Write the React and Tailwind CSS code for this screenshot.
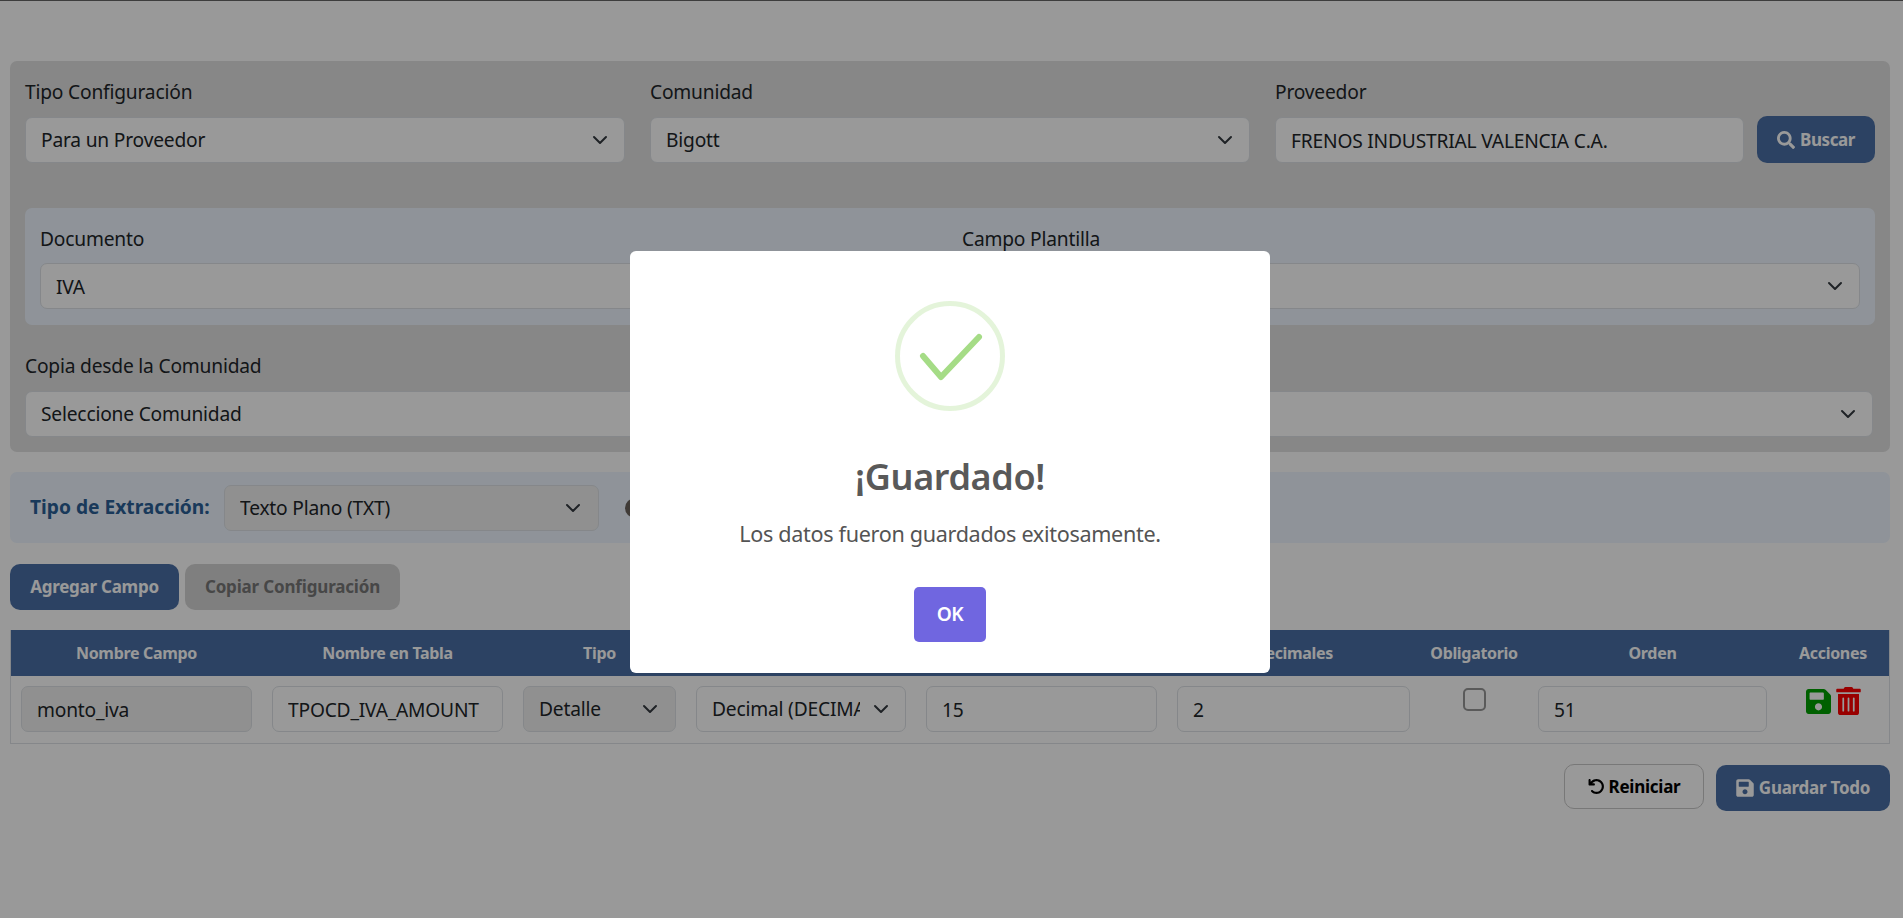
import { FaSearch, FaSave, FaTrashAlt } from "react-icons/fa";
import { FaArrowRotateLeft } from "react-icons/fa6";

const font = { fontFamily: '"Noto Sans", sans-serif' };

function Chevron({ className }) {
  return (
    <svg viewBox="0 0 16 16" className={`absolute pointer-events-none w-[16px] h-[16px] top-1/2 -translate-y-1/2 ${className}`}>
      <path d="m2 5 6 6 6-6" fill="none" stroke="#343a40" strokeWidth="2" strokeLinecap="round" strokeLinejoin="round" />
    </svg>
  );
}

function Select({ value, className = "", bg = "bg-white", border = "border-[#dee2e6]", chevron = "right-[17px]" }) {
  return (
    <div className={`relative ${className}`}>
      <select
        defaultValue={value}
        className={`appearance-none w-full h-[46px] rounded-[7px] border ${border} ${bg} pl-[15px] pr-[45px] pt-[1px] text-[19.2px] tracking-[-0.01em] text-[#212529] outline-none`}
      >
        <option>{value}</option>
      </select>
      <Chevron className={chevron} />
    </div>
  );
}

function Input({ value, className = "", bg = "bg-white" }) {
  return (
    <input
      defaultValue={value}
      className={`w-full h-[46px] rounded-[7px] border border-[#dee2e6] ${bg} px-[15px] text-[19.2px] tracking-[-0.01em] text-[#212529] outline-none ${className}`}
    />
  );
}

function Label({ children, className = "" }) {
  return <label className={`block h-[26px] leading-[26px] text-[19.2px] tracking-[-0.01em] text-[#212529] ${className}`}>{children}</label>;
}

const columns = [
  "Nombre Campo",
  "Nombre en Tabla",
  "Tipo",
  "Tipo de Dato",
  "Longitud",
  "Decimales",
  "Obligatorio",
  "Orden",
  "Acciones",
];

const gridCols = "grid grid-cols-[251px_251px_173px_230px_251px_253px_108px_249px_112px]";

export default function App() {
  return (
    <div style={font} className="h-[918px] overflow-hidden bg-white border-t border-[#666] pl-[10px] pr-[13px] pt-[60px]">
      <div className="h-[391px] rounded-[7px] bg-[#e1e1e1] pt-[18px] px-[15px]">
        <div className="flex">
          <div className="w-[600px]">
            <Label className="mb-[12px]">Tipo Configuración</Label>
            <Select value="Para un Proveedor" />
          </div>
          <div className="w-[600px] ml-[25px]">
            <Label className="mb-[12px]">Comunidad</Label>
            <Select value="Bigott" />
          </div>
          <div className="w-[469px] ml-[25px]">
            <Label className="mb-[12px]">Proveedor</Label>
            <Input value="FRENOS INDUSTRIAL VALENCIA C.A." />
          </div>
          <button className="ml-[13px] mt-[37px] w-[118px] h-[47px] rounded-[10px] bg-[#4a6fa5] text-white text-[17px] font-bold tracking-[-0.025em] flex items-center justify-center gap-[5px]">
            <FaSearch className="w-[18px] h-[18px]" /> Buscar
          </button>
        </div>

        <div className="mt-[45px] h-[117px] rounded-[7px] bg-[#eef5ff] px-[15px] pt-[18px] flex gap-[40px]">
          <div className="w-[882px]">
            <Label className="mb-[11px]">Documento</Label>
            <Input value="IVA" />
          </div>
          <div className="flex-1">
            <Label className="mb-[11px]">Campo Plantilla</Label>
            <Select value="monto_iva" />
          </div>
        </div>

        <div className="mt-[28px] mr-[2px]">
          <Label className="mb-[12px]">Copia desde la Comunidad</Label>
          <Select value="Seleccione Comunidad" />
        </div>
      </div>

      <div className="mt-[20px] h-[71px] rounded-[7px] bg-[#eef5ff] flex items-center pl-[20px]">
        <span className="w-[194px] text-[19.2px] font-bold tracking-normal text-[#2a5f96]">Tipo de Extracción:</span>
        <Select value="Texto Plano (TXT)" className="w-[375px]" bg="bg-[#f1f1f1]" chevron="right-[18px]" />
        <span className="ml-[26px] w-[20px] h-[20px] rounded-full bg-[#6b635d]" />
      </div>

      <div className="mt-[21px] flex gap-[6px]">
        <button className="w-[169px] h-[46px] rounded-[10px] bg-[#4a6fa5] text-white text-[17px] font-bold tracking-[-0.015em]">Agregar Campo</button>
        <button className="w-[215px] h-[46px] rounded-[10px] bg-[#d4d4d4] text-[#777] text-[17px] font-bold tracking-[-0.01em]">Copiar Configuración</button>
      </div>

      <div className="mt-[20px] w-[1880px] border border-[#dee2e6] border-t-0">
        <div className={`${gridCols} bg-[#4a6fa5] h-[46px] items-center`}>
          {columns.map((c) => (
            <div key={c} className="text-center text-white text-[16px] font-bold tracking-[-0.02em]">{c}</div>
          ))}
        </div>
        <div className={`${gridCols} h-[67px] pt-[10px]`}>
          <div className="px-[10px]"><Input value="monto_iva" bg="bg-[#f1f1f1]" /></div>
          <div className="px-[10px]"><Input value="TPOCD_IVA_AMOUNT" /></div>
          <div className="px-[10px]"><Select value="Detalle" bg="bg-[#f1f1f1]" chevron="right-[18px]" /></div>
          <div className="px-[10px]"><Select value="Decimal (DECIMAL)" /></div>
          <div className="px-[10px]"><Input value="15" /></div>
          <div className="px-[10px]"><Input value="2" /></div>
          <div className="flex justify-center pt-[2px]">
            <span className="w-[23px] h-[23px] rounded-[5px] border-2 border-[#969696] bg-white" />
          </div>
          <div className="px-[10px]"><Input value="51" /></div>
          <div className="flex justify-center items-center gap-[5px] h-[28px] mt-[1px]">
            <FaSave className="w-[25px] h-[29px] text-[#00a000]" />
            <FaTrashAlt className="w-[25px] h-[28px] text-[#ff0000]" />
          </div>
        </div>
      </div>

      <div className="mt-[20px] flex justify-end gap-[12px]">
        <button className="w-[140px] h-[45px] rounded-[10px] border border-[#c8c8c8] bg-white text-black text-[17px] font-bold tracking-[-0.015em] flex items-center justify-center gap-[4px]">
          <FaArrowRotateLeft className="w-[17px] h-[17px]" /> Reiniciar
        </button>
        <button className="mt-[1px] w-[174px] h-[46px] rounded-[10px] bg-[#4a6fa5] text-white text-[17px] font-bold tracking-[-0.015em] flex items-center justify-center gap-[5px]">
          <FaSave className="w-[18px] h-[20px]" /> Guardar Todo
        </button>
      </div>

      <div className="fixed inset-0 bg-black/40 flex justify-center items-start pr-[3px]">
        <div className="mt-[251px] w-[640px] h-[422px] rounded-[6px] bg-white flex flex-col items-center pt-[50px]">
          <svg viewBox="0 0 110 110" className="w-[110px] h-[110px]">
            <circle cx="55" cy="55" r="52.5" fill="none" stroke="#a5dc86" strokeOpacity="0.3" strokeWidth="5" />
            <path d="M28 55 L46 76 L84 36" fill="none" stroke="#a5dc86" strokeWidth="6" strokeLinecap="round" strokeLinejoin="round" />
          </svg>
          <h2 className="mt-[41px] text-[36px] leading-[50px] font-semibold tracking-[-0.01em] text-[#595959]">¡Guardado!</h2>
          <p className="mt-[16px] text-[21.6px] leading-[32px] tracking-[-0.015em] text-[#545454]">Los datos fueron guardados exitosamente.</p>
          <button className="mt-[37px] w-[72px] h-[55px] rounded-[5px] bg-[#7066e0] text-white text-[19.2px] font-semibold tracking-[-0.03em]">OK</button>
        </div>
      </div>
    </div>
  );
}
